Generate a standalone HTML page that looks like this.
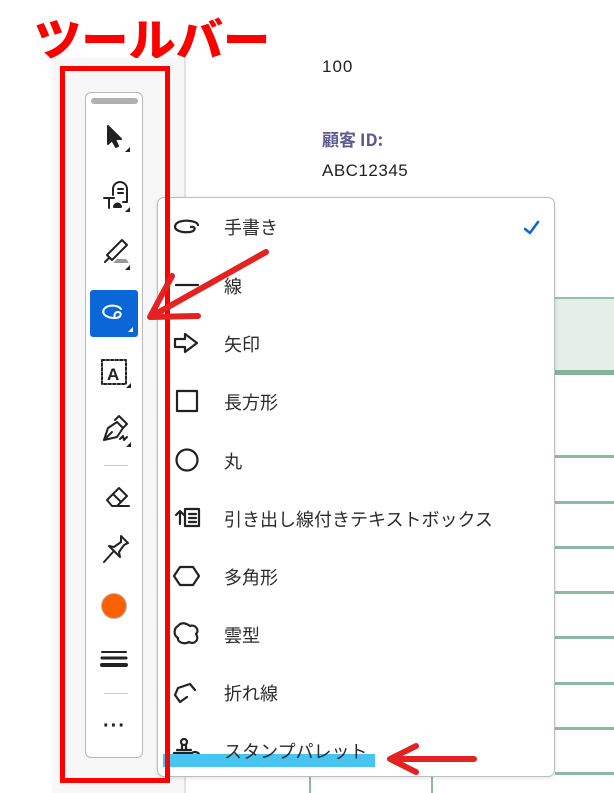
<!DOCTYPE html>
<html><head><meta charset="utf-8"><style>
*{margin:0;padding:0;box-sizing:border-box}
body{width:614px;height:793px;position:relative;overflow:hidden;background:#fff;font-family:"Liberation Sans","Noto Sans CJK JP",sans-serif}
.abs{position:absolute}
.title{left:34px;top:8px;font-size:45px;font-weight:900;color:#f00;letter-spacing:0px;font-family:"Noto Sans CJK JP",sans-serif;line-height:58px;transform:scaleX(1.05);transform-origin:left}
.side{left:52px;top:58px;width:134px;height:735px;background:#f7f7f7;border-right:2px solid #e2e2e2}
.tb{left:85px;top:92px;width:58px;height:666px;background:#fff;border:1.5px solid #b9b9b9;border-radius:6px}
.grip{left:91px;top:98px;width:47px;height:6px;border-radius:3px;background:#b0b0b0}
.sep{position:absolute;left:104px;width:24px;height:1px;background:#ccc}
.menu{left:157px;top:197px;width:398px;height:580px;background:#fff;border:1.5px solid #bdbdbd;border-radius:7px;box-shadow:0 1px 4px rgba(0,0,0,.12)}
.item{position:absolute;left:224px;font-size:18px;color:#2a2a2a;font-family:"Noto Sans CJK JP",sans-serif;line-height:22px}
.hl{position:absolute;left:0;width:614px;height:3px;background:#8cbba3}
</style></head><body>
<div class="abs title">ツールバー</div>
<div class="abs side"></div>
<div class="abs" style="left:322px;top:57px;font-size:17px;color:#222;letter-spacing:1px">100</div>
<div class="abs" style="left:322px;top:126px;font-size:17px;color:#5d5a92;font-weight:bold;font-family:'Noto Sans CJK JP',sans-serif">顧客 ID:</div>
<div class="abs" style="left:322px;top:161px;font-size:17px;color:#222;letter-spacing:.5px">ABC12345</div>
<div class="abs" style="left:555px;top:297px;width:59px;height:78px;background:#e4ede8;border-top:2px solid #93c2a9;border-bottom:5px solid #84b59b"></div>
<div class="hl" style="top:455px;left:555px"></div>
<div class="hl" style="top:501px;left:555px"></div>
<div class="hl" style="top:546px;left:555px"></div>
<div class="hl" style="top:591px;left:555px"></div>
<div class="hl" style="top:636px;left:555px"></div>
<div class="hl" style="top:682px;left:555px"></div>
<div class="hl" style="top:727px;left:555px"></div>
<div class="hl" style="top:772px;left:555px"></div>
<div class="abs" style="left:309px;top:777px;width:2px;height:16px;background:#8cbba3"></div>
<div class="abs" style="left:431px;top:777px;width:2px;height:16px;background:#8cbba3"></div>

<div class="abs tb"></div>
<div class="abs grip"></div>
<svg class="abs" style="left:85px;top:92px" width="58" height="666" viewBox="0 0 58 666" fill="none" stroke="#222" stroke-width="2" stroke-linecap="round" stroke-linejoin="round">
<path d="M23 34 L23 52 L27 48 L31 55 L33 54 L30 47 L36 47 Z" fill="#222"/>
<path d="M45 60 L45 55 L40 60Z" fill="#222" stroke="none"/>
<path d="M28 103 L28 97 A7 7 0 0 1 42 97 L42 110 L38 110"/><path d="M33 97 L38 97 M33 101 L38 101"/>
<path d="M19 106 L29 106 M24 106 L24 116"/><path d="M29 115 a3.5 3.5 0 0 1 7 0z" fill="#222"/>
<path d="M45 120 L45 115 L40 120Z" fill="#222" stroke="none"/>
<path d="M22 163 L37 148 L42 153 L27 168 Z"/><path d="M20 170 L24 166"/>
<path d="M28 171 L44 171 L41 167 L32 167Z" fill="#999" stroke="none"/>
<path d="M45 178 L45 173 L40 178Z" fill="#222" stroke="none"/>
</svg>
<div class="abs" style="left:90px;top:290px;width:48px;height:47px;background:#0b66d8;border-radius:3px"></div>
<svg class="abs" style="left:90px;top:290px" width="48" height="47" fill="none" stroke="#fff" stroke-width="2" stroke-linecap="round"><path d="M31 19 C28 15 18 14 14 19 C11 25 18 28 25 28 C32 28 32 22 28 22 C24 22 24 27 25 28"/><path d="M43 42 L43 37 L38 42Z" fill="#fff" stroke="none"/></svg>
<svg class="abs" style="left:85px;top:92px" width="58" height="666" viewBox="0 0 58 666" fill="none" stroke="#222" stroke-width="2" stroke-linecap="round" stroke-linejoin="round">
<rect x="17" y="268" width="24" height="24" stroke-dasharray="2.5 2"/>
<text x="22" y="288" font-size="17" font-weight="bold" fill="#222" stroke="none" font-family="Liberation Sans">A</text>
<path d="M46 296 L46 291 L41 296Z" fill="#222" stroke="none"/>
<path d="M19 348 L23 336 L32 330 L38 336 L32 345 Z"/><path d="M30 328 L34 324 L42 332 L38 336"/><path d="M19 348 L27 340"/><path d="M35 347 l3 -3 l1 4 l3 -3"/>
<path d="M46 355 L46 350 L41 355Z" fill="#222" stroke="none"/>
<path d="M22 408 L34 396 L42 404 L32 414 L27 414 Z"/><path d="M28 402 L36 410"/><path d="M32 414 L44 414"/>
<path d="M36 444 L43 451 L39 453 L34 460 L35 465 L24 454 L29 455 L36 450 Z M28 460 L19 470"/>
<path d="M17 560 H41" stroke-width="2"/><path d="M17 566 H41" stroke-width="3"/><path d="M17 573 H41" stroke-width="4"/>
</svg>
<div class="sep" style="top:465px"></div>
<div class="sep" style="top:693px"></div>
<div class="abs" style="left:101px;top:593px;width:26px;height:26px;border-radius:50%;background:#ff6000;border:1.5px solid #bbb"></div>
<div class="abs" style="left:103px;top:715px;font-size:20px;font-weight:bold;color:#222;letter-spacing:1px">···</div>

<div class="abs menu"></div>
<svg class="abs" style="left:0;top:0" width="614" height="793" fill="none" stroke="#222" stroke-width="2.2" stroke-linecap="round" stroke-linejoin="round">
<path d="M198 225 C197 220 180 219 176 224 C172 230 181 233 190 232 C196 231 196 226 191 227"/>
<path d="M176 285 H198"/>
<path d="M175 339 H185 V334 L197 343 L185 352 V347 H175 Z"/>
<rect x="177" y="391" width="20" height="20"/>
<circle cx="187" cy="460" r="10.5"/>
<path d="M180 524 V512 M176 515 L180 511 L184 515"/><path d="M185 509 H199 V526 H185 Z M189 514 H196 M189 518 H196 M189 522 H196"/>
<path d="M180 567 H193 L199 576 L193 585 H180 L174 576 Z"/>
<path d="M178 626 C182 621 187 624 190 626 C195 624 200 630 196 634 C200 640 194 645 189 642 C184 645 177 642 178 638 C173 635 174 628 178 626Z"/>
<path d="M195 690 L190 684 L178 688 L175 695 L180 702 L187 697"/>
<circle cx="184" cy="742" r="3"/><path d="M182 745 L182 749 M186 745 L186 749 M177 750 H191 M174 756 V753 H191 M174 760 H187"/><circle cx="195" cy="757" r="5"/>
<path d="M525 229 L530 233 L538 222" stroke="#0b66d8" stroke-width="2.5"/>
</svg>
<div class="abs" style="left:163px;top:754px;width:212px;height:13px;background:#47c5f0"></div>
<div class="item" style="top:216px">手書き</div>
<div class="item" style="top:275px">線</div>
<div class="item" style="top:333px">矢印</div>
<div class="item" style="top:391px">長方形</div>
<div class="item" style="top:450px">丸</div>
<div class="item" style="top:508px">引き出し線付きテキストボックス</div>
<div class="item" style="top:566px">多角形</div>
<div class="item" style="top:624px">雲型</div>
<div class="item" style="top:682px">折れ線</div>
<div class="item" style="top:740px">スタンプパレット</div>

<div class="abs" style="left:60px;top:66px;width:110px;height:717px;border:5px solid #f00"></div>
<svg class="abs" style="left:0;top:0" width="614" height="793" fill="none" stroke="#e32222" stroke-width="6" stroke-linecap="round" stroke-linejoin="round">
<path d="M266 252 L152 316"/><path d="M172 276 L150 317 L198 316"/>
<path d="M474 759 L392 759"/><path d="M416 746 L390 759 L416 772"/>
</svg>
</body></html>
